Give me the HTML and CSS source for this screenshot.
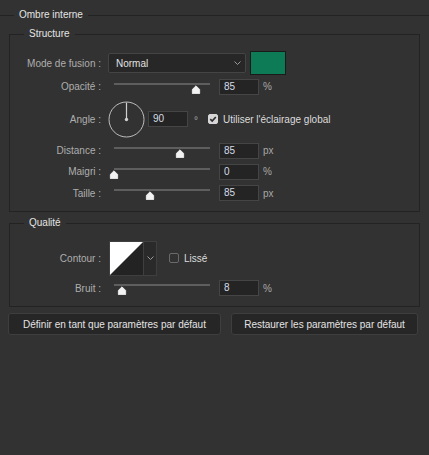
FILE: index.html
```html
<!DOCTYPE html>
<html lang="fr">
<head>
<meta charset="utf-8">
<title>Ombre interne</title>
<link rel="stylesheet" href="styles.css">
</head>
<body>
<fieldset class="group">
  <legend class="group-title">Ombre interne</legend>

  <fieldset class="box box-structure">
    <legend class="box-title">Structure</legend>
    <div class="form form-structure">
      <div class="field-label">Mode de fusion :</div>
      <div class="field-row">
        <div class="select">
          <span class="select-value">Normal</span>
          <svg class="chevron" width="7" height="4" viewBox="0 0 7 4"><polyline points="0.5,0.5 3.5,3.5 6.5,0.5" fill="none" stroke="#9a9a9a" stroke-width="1"/></svg>
        </div>
        <div class="swatch"></div>
      </div>

      <div class="field-label">Opacité :</div>
      <div class="field-row slider-row">
        <div class="slider"><div class="track"></div><svg class="thumb" style="left:85%" width="9" height="9" viewBox="0 0 9 9"><path d="M4.5 0.8 L8.3 4.6 V8.5 H0.7 V4.6 Z" fill="#f2f2f2" stroke="#f2f2f2" stroke-width="0.8" stroke-linejoin="round"/></svg></div>
        <div class="num">85</div><span class="unit">%</span>
      </div>

      <div class="field-label">Angle :</div>
      <div class="field-row">
        <svg class="dial" width="37" height="37" viewBox="0 0 37 37"><circle cx="18.5" cy="18.5" r="17.5" fill="none" stroke="#bdbdbd" stroke-width="1"/><line x1="18.5" y1="1.5" x2="18.5" y2="18.5" stroke="#d0d0d0" stroke-width="1.2"/><circle cx="18.5" cy="18.5" r="1.7" fill="#d0d0d0"/></svg>
        <div class="num">90</div><span class="deg">°</span>
        <span class="check checked"><svg width="10" height="10" viewBox="0 0 10 10"><polyline points="2.3,5.2 4.2,7.1 7.8,3" fill="none" stroke="#2e2e2e" stroke-width="1.7"/></svg></span>
        <span class="check-text">Utiliser l'éclairage global</span>
      </div>

      <div class="field-label">Distance :</div>
      <div class="field-row slider-row">
        <div class="slider"><div class="track"></div><svg class="thumb" style="left:69%" width="9" height="9" viewBox="0 0 9 9"><path d="M4.5 0.8 L8.3 4.6 V8.5 H0.7 V4.6 Z" fill="#f2f2f2" stroke="#f2f2f2" stroke-width="0.8" stroke-linejoin="round"/></svg></div>
        <div class="num">85</div><span class="unit">px</span>
      </div>

      <div class="field-label">Maigri :</div>
      <div class="field-row slider-row">
        <div class="slider"><div class="track"></div><svg class="thumb" style="left:0%" width="9" height="9" viewBox="0 0 9 9"><path d="M4.5 0.8 L8.3 4.6 V8.5 H0.7 V4.6 Z" fill="#f2f2f2" stroke="#f2f2f2" stroke-width="0.8" stroke-linejoin="round"/></svg></div>
        <div class="num">0</div><span class="unit">%</span>
      </div>

      <div class="field-label">Taille :</div>
      <div class="field-row slider-row">
        <div class="slider"><div class="track"></div><svg class="thumb" style="left:37.5%" width="9" height="9" viewBox="0 0 9 9"><path d="M4.5 0.8 L8.3 4.6 V8.5 H0.7 V4.6 Z" fill="#f2f2f2" stroke="#f2f2f2" stroke-width="0.8" stroke-linejoin="round"/></svg></div>
        <div class="num">85</div><span class="unit">px</span>
      </div>
    </div>
  </fieldset>

  <fieldset class="box box-quality">
    <legend class="box-title">Qualité</legend>
    <div class="form form-quality">
      <div class="field-label">Contour :</div>
      <div class="field-row">
        <div class="contour">
          <svg class="contour-swatch" width="33" height="33" viewBox="0 0 33 33"><rect width="33" height="33" fill="#232323"/><polygon points="0,0 33,0 0,33" fill="#ffffff"/></svg>
          <div class="contour-drop"><svg width="7" height="4" viewBox="0 0 7 4"><polyline points="0.5,0.5 3.5,3.5 6.5,0.5" fill="none" stroke="#9a9a9a" stroke-width="1"/></svg></div>
        </div>
        <span class="check"></span>
        <span class="check-text">Lissé</span>
      </div>

      <div class="field-label">Bruit :</div>
      <div class="field-row slider-row">
        <div class="slider"><div class="track"></div><svg class="thumb" style="left:8%" width="9" height="9" viewBox="0 0 9 9"><path d="M4.5 0.8 L8.3 4.6 V8.5 H0.7 V4.6 Z" fill="#f2f2f2" stroke="#f2f2f2" stroke-width="0.8" stroke-linejoin="round"/></svg></div>
        <div class="num">8</div><span class="unit">%</span>
      </div>
    </div>
  </fieldset>

  <div class="actions">
    <button class="btn btn-default">Définir en tant que paramètres par défaut</button>
    <button class="btn btn-restore">Restaurer les paramètres par défaut</button>
  </div>
</fieldset>
</body>
</html>
```

FILE: styles.css
```css
html, body {
  margin: 0;
  padding: 0;
}
body {
  background: #323232;
  font-family: "Liberation Sans", Arial, sans-serif;
  font-size: 10px;
  color: #b0b0b0;
  width: 429px;
  height: 455px;
  overflow: hidden;
}

.group {
  margin: 9px 0 0 0;
  padding: 0;
  border: 0;
  border-top: 1px solid #232323;
  min-inline-size: 0;
}
.group-title {
  margin-left: 14px;
  padding: 0 5px;
  line-height: 12px;
  height: 12px;
  color: #e4e4e4;
}

.box {
  margin: 0 9px;
  padding: 0;
  border: 1px solid #232323;
  min-inline-size: 0;
}
.box-structure { margin-top: 7px; }
.box-quality { margin-top: 5px; }
.box-title {
  margin-left: 14px;
  padding: 0 5px;
  line-height: 12px;
  height: 12px;
  color: #e4e4e4;
}

.form {
  display: grid;
  grid-template-columns: 91px 1fr;
  column-gap: 7px;
  align-items: center;
}
.form-structure {
  grid-template-rows: 24px 23px 42px 21px 21px 22px;
  padding: 11px 0 7px 0;
}
.form-quality {
  grid-template-rows: 34px 26px;
  padding: 12px 0 5px 0;
}

.field-label {
  text-align: right;
  color: #aeaeae;
  white-space: nowrap;
}

.field-row {
  display: flex;
  align-items: center;
  height: 100%;
}
.slider-row { padding-left: 6px; }

.select {
  width: 138px;
  height: 20px;
  box-sizing: border-box;
  background: #272727;
  border: 1px solid #444444;
  border-radius: 2px;
  display: flex;
  align-items: center;
  justify-content: space-between;
  padding: 0 4px 0 7px;
  color: #e2e2e2;
}
.chevron { display: block; }
.swatch {
  width: 36px;
  height: 24px;
  box-sizing: border-box;
  margin-left: 4px;
  background: #0c7b56;
  border: 1px solid #1a1a1a;
}

.slider {
  position: relative;
  width: 96px;
  height: 16px;
  flex: none;
}
.track {
  margin-top: 4px;
  height: 2px;
  background: #5e5e5e;
}
.thumb {
  position: absolute;
  top: 6px;
  transform: translateX(-50%);
  display: block;
}

.num {
  width: 40px;
  height: 16px;
  box-sizing: border-box;
  margin-left: 9px;
  background: #242424;
  border: 1px solid #454545;
  padding-left: 4px;
  line-height: 14px;
  color: #d4dce6;
  flex: none;
}
.unit {
  margin-left: 4px;
  color: #a8a8a8;
}

.dial {
  display: block;
  flex: none;
}
.dial + .num { margin-left: 3px; }
.deg {
  margin-left: 6px;
  color: #a8a8a8;
  padding-top: 3px;
}

.check {
  width: 10px;
  height: 10px;
  box-sizing: border-box;
  border: 1px solid #6a6a6a;
  border-radius: 2px;
  flex: none;
  margin-left: 12px;
}
.deg + .check { margin-left: 10px; }
.check svg { display: block; margin: -1px; }
.check.checked {
  background: #d6d6d6;
  border-color: #d6d6d6;
}
.check-text {
  margin-left: 5px;
  color: #dcdcdc;
  white-space: nowrap;
}

.contour {
  display: flex;
  height: 35px;
  box-sizing: border-box;
  border: 1px solid #3f3f3f;
  margin-left: 1px;
}
.contour-swatch { display: block; }
.contour-drop {
  width: 12px;
  border-left: 1px solid #3f3f3f;
  background: #2a2a2a;
  display: flex;
  align-items: center;
  justify-content: center;
}

.actions {
  display: flex;
  gap: 10px;
  margin: 6px 0 0 8px;
}
.btn {
  height: 22px;
  box-sizing: border-box;
  background: #262626;
  border: 1px solid #3e3e3e;
  border-radius: 3px;
  font-family: "Liberation Sans", Arial, sans-serif;
  font-size: 10px;
  color: #e4e4e4;
  padding: 0;
  white-space: nowrap;
}
.btn-default { width: 213px; }
.btn-restore { width: 187px; }
```
